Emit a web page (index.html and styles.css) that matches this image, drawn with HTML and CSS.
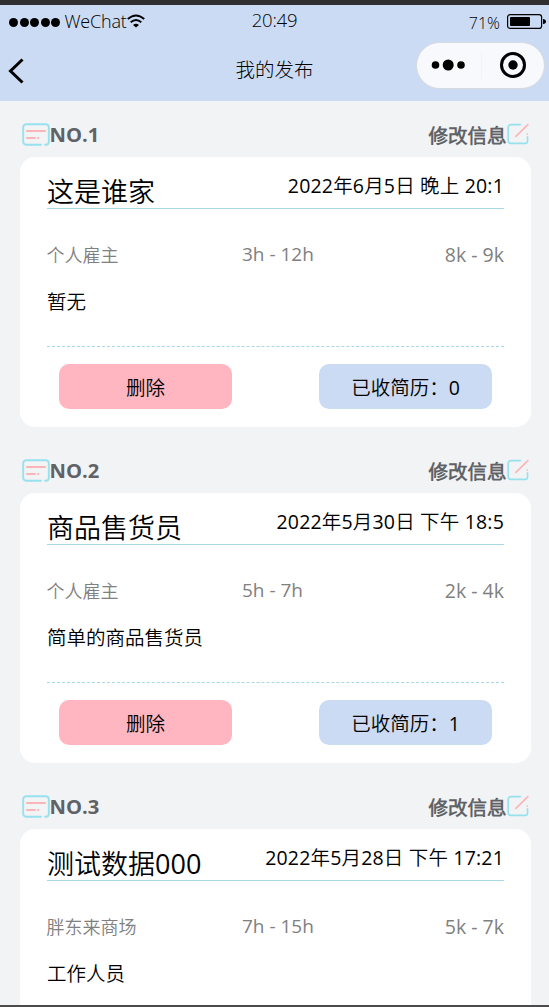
FILE: index.html
```html
<!DOCTYPE html>
<html lang="zh-CN">
<head>
<meta charset="utf-8">
<title>我的发布</title>
<link rel="stylesheet" href="styles.css">
</head>
<body>
<svg class="defs" aria-hidden="true">
  <symbol id="note" viewBox="0 0 28 24">
    <path d="M19 21.8H4.200a3 3 0 0 1-3-3V4.200a3 3 0 0 1 3-3h19.600a3 3 0 0 1 3 3v14.600a3 3 0 0 1-3 3H23" fill="none" stroke="#98e1ee" stroke-width="1.900" stroke-linecap="round"/>
    <path d="M5 8h18M5 15h8M16 15h.6" fill="none" stroke="#fbb5b9" stroke-width="1.900" stroke-linecap="round"/>
  </symbol>
  <symbol id="edit" viewBox="0 0 24 22">
    <path d="M14 1.200H4.200a3 3 0 0 0-3 3v13.600a3 3 0 0 0 3 3h15a2.200 2.200 0 0 0 2.200-2.200V14" fill="none" stroke="#98e1ee" stroke-width="1.700" stroke-linecap="round"/>
    <path d="M9.300 13.500 21.800 1.200M21 11h.4" fill="none" stroke="#fbb5b9" stroke-width="1.700" stroke-linecap="round"/>
  </symbol>
</svg>
<div class="phone">
  <header class="top">
    <div class="status">
      <div class="carrier">
        <i class="dot"></i><i class="dot"></i><i class="dot"></i><i class="dot"></i><i class="dot"></i>
        <span class="carrier-name">WeChat</span>
        <svg class="wifi" viewBox="0 0 18 14"><path d="M.8 5Q9-2.200 17.200 5M3.700 8.300Q9 3.600 14.300 8.300" fill="none" stroke="#000" stroke-width="1.900"/><path d="M6 11Q9 8.500 12 11L9 13.600Z"/></svg>
      </div>
      <span class="clock">20:49</span>
      <div class="power"><span class="percent">71%</span>
        <svg class="battery" viewBox="0 0 40 16"><rect x=".6" y=".6" width="34" height="13.800" rx="2.500" fill="none" stroke="#000" stroke-width="1.200"/><rect x="3" y="3" width="20" height="9" rx="1"/><path d="M36 5q3 .5 3 2.500t-3 2.500z"/></svg>
      </div>
    </div>
    <div class="nav">
      <svg class="back" viewBox="0 0 16 26"><path d="M14.500 1.500 2.500 13l12 11.500" fill="none" stroke="#000" stroke-width="3"/></svg>
      <h1 class="nav-title">我的发布</h1>
      <div class="capsule">
        <svg class="more" viewBox="0 0 34 12"><circle cx="4.500" cy="6" r="3.800"/><circle cx="17.200" cy="6" r="5.500"/><circle cx="30" cy="6" r="3.800"/></svg>
        <i class="divider"></i>
        <svg class="target" viewBox="0 0 26 26"><circle cx="13" cy="13" r="11.500" fill="none" stroke="#000" stroke-width="3"/><circle cx="13" cy="13" r="4.700"/></svg>
      </div>
    </div>
  </header>
  <main class="list">
    <section class="post">
      <div class="post-head"><svg class="note"><use href="#note"/></svg><span class="number">NO.1</span><span class="modify">修改信息</span><svg class="edit"><use href="#edit"/></svg></div>
      <article class="card">
        <div class="heading"><h2 class="title">这是谁家</h2><time class="date">2022年6月5日 晚上 20:1</time></div>
        <div class="facts"><span class="employer">个人雇主</span><span class="hours">3h - 12h</span><span class="pay">8k - 9k</span></div>
        <p class="desc">暂无</p>
        <div class="actions"><button class="btn remove">删除</button><button class="btn resumes">已收简历：0</button></div>
      </article>
    </section>
    <section class="post">
      <div class="post-head"><svg class="note"><use href="#note"/></svg><span class="number">NO.2</span><span class="modify">修改信息</span><svg class="edit"><use href="#edit"/></svg></div>
      <article class="card">
        <div class="heading"><h2 class="title">商品售货员</h2><time class="date">2022年5月30日 下午 18:5</time></div>
        <div class="facts"><span class="employer">个人雇主</span><span class="hours">5h - 7h</span><span class="pay">2k - 4k</span></div>
        <p class="desc">简单的商品售货员</p>
        <div class="actions"><button class="btn remove">删除</button><button class="btn resumes">已收简历：1</button></div>
      </article>
    </section>
    <section class="post">
      <div class="post-head"><svg class="note"><use href="#note"/></svg><span class="number">NO.3</span><span class="modify">修改信息</span><svg class="edit"><use href="#edit"/></svg></div>
      <article class="card">
        <div class="heading"><h2 class="title">测试数据000</h2><time class="date">2022年5月28日 下午 17:21</time></div>
        <div class="facts"><span class="employer">胖东来商场</span><span class="hours">7h - 15h</span><span class="pay">5k - 7k</span></div>
        <p class="desc">工作人员</p>
      </article>
    </section>
  </main>
</div>
</body>
</html>
```
FILE: styles.css
```css
* { box-sizing: border-box; }
body {
  margin: 0;
  font-family: "Open Sans", "Noto Sans CJK SC DemiLight", "Noto Sans CJK SC Light", "Noto Sans CJK SC", sans-serif;
  font-size: 19.5px;
  font-weight: 400;
  color: #000;
}
h1, h2, p { margin: 0; font-weight: inherit; }
svg { display: block; flex: none; }
.defs { display: none; }
.phone {
  height: 1007px;
  display: flex;
  flex-direction: column;
  overflow: hidden;
  background: #f1f3f5;
  border-top: 5px solid #303030;
  border-bottom: 2px solid #4b4b4b;
}
.top {
  height: 96px;
  flex: none;
  background: #cbdbf3;
  font-family: "Open Sans", "Noto Sans CJK SC", sans-serif;
  font-weight: 300;
}
.status {
  height: 32px;
  display: grid;
  grid-template-columns: 1fr auto 1fr;
  align-items: center;
}
.carrier { display: flex; align-items: center; gap: 1.500px; padding: 0 0 2px 9px; }
.dot { width: 9px; height: 9px; margin-top: 3px; border-radius: 50%; background: #000; }
.carrier-name { margin-left: 3px; font-size: 18px; line-height: 28px; letter-spacing: -0.200px; }
.wifi { width: 18px; height: 14px; margin: 1px 0 0 -1.500px; }
.clock { font-size: 18.500px; line-height: 30px; letter-spacing: -0.200px; margin-top: -3px; }
.power { display: flex; justify-content: flex-end; align-items: center; gap: 7px; padding: 1px 2px 0 0; }
.percent { font-size: 16px; line-height: 30px; margin-top: 2px; }
.battery { width: 40px; height: 16px; }
.nav {
  height: 64px;
  display: grid;
  grid-template-columns: 1fr auto 1fr;
  align-items: center;
}
.back { width: 16px; height: 26px; margin: 3px 0 0 8px; }
.nav-title { font-size: 19.5px; line-height: 30px; margin-top: 1px; }
.capsule {
  justify-self: end;
  width: 129px;
  height: 47px;
  margin: -8px 4px 0 0;
  display: flex;
  align-items: center;
  border: 1px solid #d7dae0;
  border-radius: 24px;
  background: #f8f9fd;
}
.more { width: 34px; height: 12px; margin-left: 14px; }
.divider { width: 1px; height: 27px; margin: 0 18px 0 16px; background: #f2f3f8; }
.target { width: 26px; height: 26px; }
.list { padding: 0 18px 0 20px; }
.post { height: 336px; }
.post-head {
  height: 56px;
  padding: 11px 2px 0 2px;
  display: flex;
  align-items: center;
  color: #606266;
  font-weight: 700;
}
.note { width: 28px; height: 24px; }
.number { font-size: 20.200px; line-height: 30px; margin: -1px 0 0 -0.500px; }
.modify { margin-left: auto; line-height: 30px; padding-top: 2px; }
.edit { width: 23px; height: 22px; margin: -2px -0.500px 0 0; }
.card { height: 270px; padding: 15px 27px 0; border-radius: 15px; background: #fff; }
.heading {
  height: 37px;
  display: flex;
  justify-content: space-between;
  border-bottom: 1px solid #a9d8e6;
}
.title { font-size: 27px; line-height: 40px; }
.date { line-height: 28px; letter-spacing: 0.180px; }
.facts {
  height: 90px;
  display: grid;
  grid-template-columns: 195px 1fr auto;
  align-items: center;
  color: #808080;
}
.employer { font-size: 18px; margin-left: -0.500px; }
.hours { font-size: 19px; }
.pay { font-size: 19.500px; }
.desc { height: 48px; line-height: 29px; margin-top: -12px; }
.actions {
  height: 63px;
  margin-top: 11px;
  padding: 17px 12px 0;
  display: flex;
  justify-content: space-between;
  border-top: 1px dashed #a9d8e6;
}
.btn {
  width: 173px;
  height: 45px;
  padding: 0 0 1px;
  border: 0;
  border-radius: 10px;
  font: inherit;
  color: #000;
}
.remove { background: #ffb6c1; }
.resumes { background: #cbdbf3; }
```
